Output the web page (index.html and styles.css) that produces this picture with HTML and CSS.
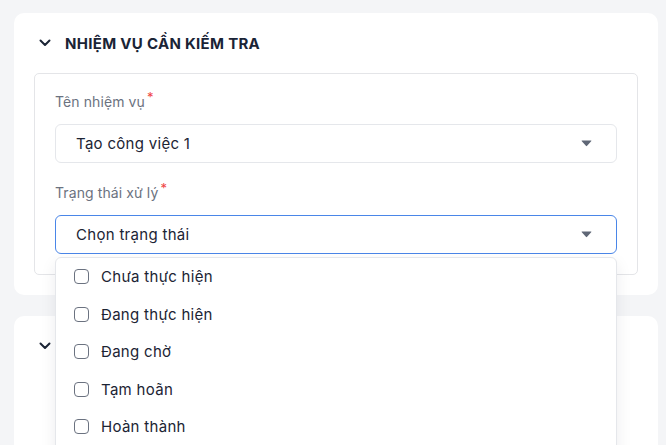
FILE: index.html
```html
<!DOCTYPE html>
<html lang="vi">
<head>
<meta charset="utf-8">
<link rel="stylesheet" href="styles.css">
</head>
<body>
<div class="page">
  <section class="card">
    <div class="card-head">
      <svg class="chev" width="12" height="8" viewBox="0 0 12 8"><path d="M1.5 1.5 L6 6 L10.5 1.5" fill="none" stroke="#1c2536" stroke-width="2" stroke-linecap="round" stroke-linejoin="round"/></svg>
      <h2 class="card-title">NHIỆM VỤ CẦN KIẾM TRA</h2>
    </div>
    <div class="box">
      <div class="field">
        <label class="label">Tên nhiệm vụ<span class="req">*</span></label>
        <div class="select">
          <span class="value">Tạo công việc 1</span>
          <svg class="caret" width="11" height="7" viewBox="0 0 11 7"><path d="M1 0.5 H10 Q10.8 0.5 10.2 1.2 L6.1 5.8 Q5.5 6.5 4.9 5.8 L0.8 1.2 Q0.2 0.5 1 0.5 Z" fill="#5f6776"/></svg>
        </div>
      </div>
      <div class="field field-last">
        <label class="label">Trạng thái xử lý<span class="req">*</span></label>
        <div class="select select-open">
          <span class="value">Chọn trạng thái</span>
          <svg class="caret" width="11" height="7" viewBox="0 0 11 7"><path d="M1 0.5 H10 Q10.8 0.5 10.2 1.2 L6.1 5.8 Q5.5 6.5 4.9 5.8 L0.8 1.2 Q0.2 0.5 1 0.5 Z" fill="#5f6776"/></svg>
          <ul class="menu">
            <li class="opt"><span class="cb"></span>Chưa thực hiện</li>
            <li class="opt"><span class="cb"></span>Đang thực hiện</li>
            <li class="opt"><span class="cb"></span>Đang chờ</li>
            <li class="opt"><span class="cb"></span>Tạm hoãn</li>
            <li class="opt"><span class="cb"></span>Hoàn thành</li>
          </ul>
        </div>
      </div>
    </div>
  </section>
  <section class="card card-second">
    <div class="card-head">
      <svg class="chev" width="12" height="8" viewBox="0 0 12 8"><path d="M1.5 1.5 L6 6 L10.5 1.5" fill="none" stroke="#1c2536" stroke-width="2" stroke-linecap="round" stroke-linejoin="round"/></svg>
    </div>
  </section>
</div>
</body>
</html>
```
FILE: styles.css
```css
* { box-sizing: border-box; }
html, body { margin: 0; padding: 0; }
body {
  background: #f4f5f7;
  font-family: "Inter", "Noto Sans", sans-serif;
  color: #1f2937;
  overflow: hidden;
  height: 445px;
}
.page {
  padding: 13px 8px 0 14px;
  display: flex;
  flex-direction: column;
  gap: 21px;
}
.card {
  background: #fff;
  border-radius: 10px;
  padding: 0 20px 20px 20px;
}
.card-head {
  height: 60px;
  display: flex;
  align-items: center;
  gap: 14px;
  padding-left: 5px;
}
.chev { flex: none; }
.card-title {
  margin: 0;
  font-size: 15px;
  font-weight: 700;
  color: #1a2436;
  letter-spacing: 0.3px;
}
.box {
  border: 1px solid #e4e5e8;
  border-radius: 5px;
  padding: 17px 20px 20px 20px;
}
.field { margin-bottom: 19px; }
.field-last { margin-bottom: 0; }
.label {
  display: block;
  height: 22px;
  line-height: 22px;
  font-size: 14px;
  color: #6b7280;
  margin-bottom: 11px;
  letter-spacing: 0.1px;
}
.req {
  color: #ef4444;
  font-size: 13px;
  position: relative;
  top: -5px;
  margin-left: 2px;
}
.select {
  position: relative;
  height: 39px;
  border: 1px solid #e5e7eb;
  border-radius: 6px;
  display: flex;
  align-items: center;
  justify-content: space-between;
  padding: 0 24px 0 20px;
  font-size: 15px;
  letter-spacing: 0.3px;
  color: #1c2434;
}
.select-open {
  border-color: #4a86e8;
}
.caret { flex: none; }
.menu {
  position: absolute;
  left: -1px;
  right: -1px;
  top: 41px;
  margin: 0;
  padding: 0;
  list-style: none;
  background: #fff;
  border: 1px solid #e5e7eb;
  border-radius: 6px;
  box-shadow: 0 6px 16px rgba(20, 30, 50, 0.08);
  height: 200px;
  z-index: 5;
}
.opt {
  height: 37.5px;
  display: flex;
  align-items: center;
  gap: 12px;
  padding-left: 18px;
  font-size: 15px;
  letter-spacing: 0.3px;
  color: #1c2434;
}
.cb {
  width: 15px;
  height: 15px;
  border: 1.5px solid #6b7280;
  border-radius: 4px;
  flex: none;
}
.card-second {
  height: 200px;
}
```
